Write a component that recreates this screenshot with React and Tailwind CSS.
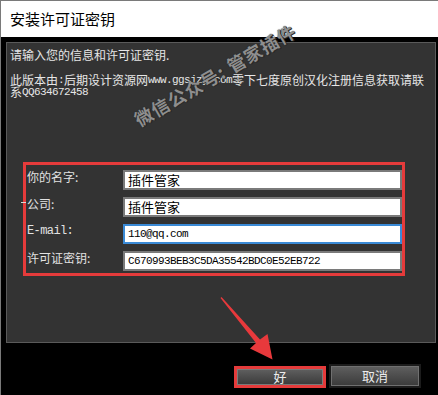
import React from "react";

const cjk = "font-['Noto_Sans_CJK_SC',sans-serif]";
const mono = "font-['Liberation_Mono','Noto_Sans_CJK_SC',monospace] text-[11px] tracking-[-0.6px]";

function Field({ label, value, monoLabel, monoValue, focused }) {
  return (
    <div className="flex items-center h-[20px]">
      <div className={`w-[96px] mb-[6px] text-[12px] leading-[14px] text-[#e2e2e2] ${monoLabel ? mono : ""}`}>
        {label}
      </div>
      <div
        className={`flex-1 h-[20px] bg-white flex items-center pl-[3px] border-2 ${
          focused ? "border-[#3a8ad6]" : "border-[#7a7a7a]"
        } text-black ${monoValue ? mono : "text-[13px]"}`}
      >
        {value}
      </div>
    </div>
  );
}

export default function App() {
  return (
    <div className={`relative w-[438px] h-[395px] bg-black border-l border-t border-[#7a7a7a] overflow-hidden ${cjk}`}>
      {/* title bar */}
      <div className="h-[36px] bg-white flex items-center pl-[9px] text-[15px] text-black">
        安装许可证密钥
      </div>

      {/* body */}
      <div className="pt-[5px] pl-[5px]">
        <div className="w-[430px] h-[301px] bg-[#333333] border border-[#5a5a5a] pt-[5px] pl-[3px]">
          <div className="h-[14px] flex items-center text-[12px] text-[#e6e6e6] whitespace-nowrap">
            请输入您的信息和许可证密钥.
          </div>
          <div className="mt-[12px] h-[12px] flex items-center text-[12px] text-[#e6e6e6] whitespace-nowrap">
            此版本由<span className={mono}>:</span>后期设计资源网
            <span className={mono}>www.ggsjzy.com</span>零下七度原创汉化注册信息获取请联
          </div>
          <div className="h-[12px] flex items-center text-[12px] text-[#e6e6e6] whitespace-nowrap">
            系<span className={mono}>QQ634672458</span>
          </div>

          <div className="mt-[64px] ml-[13px] w-[382px] h-[114px] border-[3px] border-[#e53b3b] pl-px pt-[5px] flex flex-col gap-[7px]">
            <Field label="你的名字:" value="插件管家" />
            <Field label="公司:" value="插件管家" />
            <Field label="E-mail:" value="110@qq.com" monoLabel monoValue focused />
            <Field label="许可证密钥:" value="C670993BEB3C5DA35542BDC0E52EB722" monoValue />
          </div>
        </div>

        {/* buttons */}
        <div className="mt-[23px] flex justify-end items-start gap-[5px] pr-[19px]">
          <div className="w-[92px] h-[22px] border-[3px] border-[#e53b3b] flex">
            <div className="flex-1 bg-gradient-to-b from-[#5e5e5e] to-[#3c3c3c] border border-[#7a7a7a] flex items-center justify-center text-[13px] text-[#ececec]">
              好
            </div>
          </div>
          <div className="w-[88px] h-[20px] bg-gradient-to-b from-[#5e5e5e] to-[#3c3c3c] border border-[#707070] shadow-[0_0_0_2px_#1c1c1c] flex items-center justify-center text-[13px] text-[#ececec]">
            取消
          </div>
        </div>
      </div>

      {/* small tick near 公司 */}
      <span className="absolute left-[20px] top-[201px] w-[5px] h-px bg-[#d8d8d8]" />

      {/* watermark */}
      <div className="absolute left-[214px] top-[74px] -translate-x-1/2 -translate-y-1/2 rotate-[-30deg] whitespace-nowrap text-[18px] font-bold tracking-[1px] text-[#8e8e8e] [text-shadow:0_0_1px_#222,1px_1px_0_#2a2a2a] pointer-events-none">
        微信公众号: 管家插件
      </div>

      {/* red arrow */}
      <svg className="absolute left-0 top-0 pointer-events-none" width="438" height="395" viewBox="1 1 438 395">
        <polygon
          points="221.5,297 260,339.5 267.5,334 272.5,359.5 250,348.5 256,343 220.5,298"
          fill="#e8393c"
        />
      </svg>
    </div>
  );
}
